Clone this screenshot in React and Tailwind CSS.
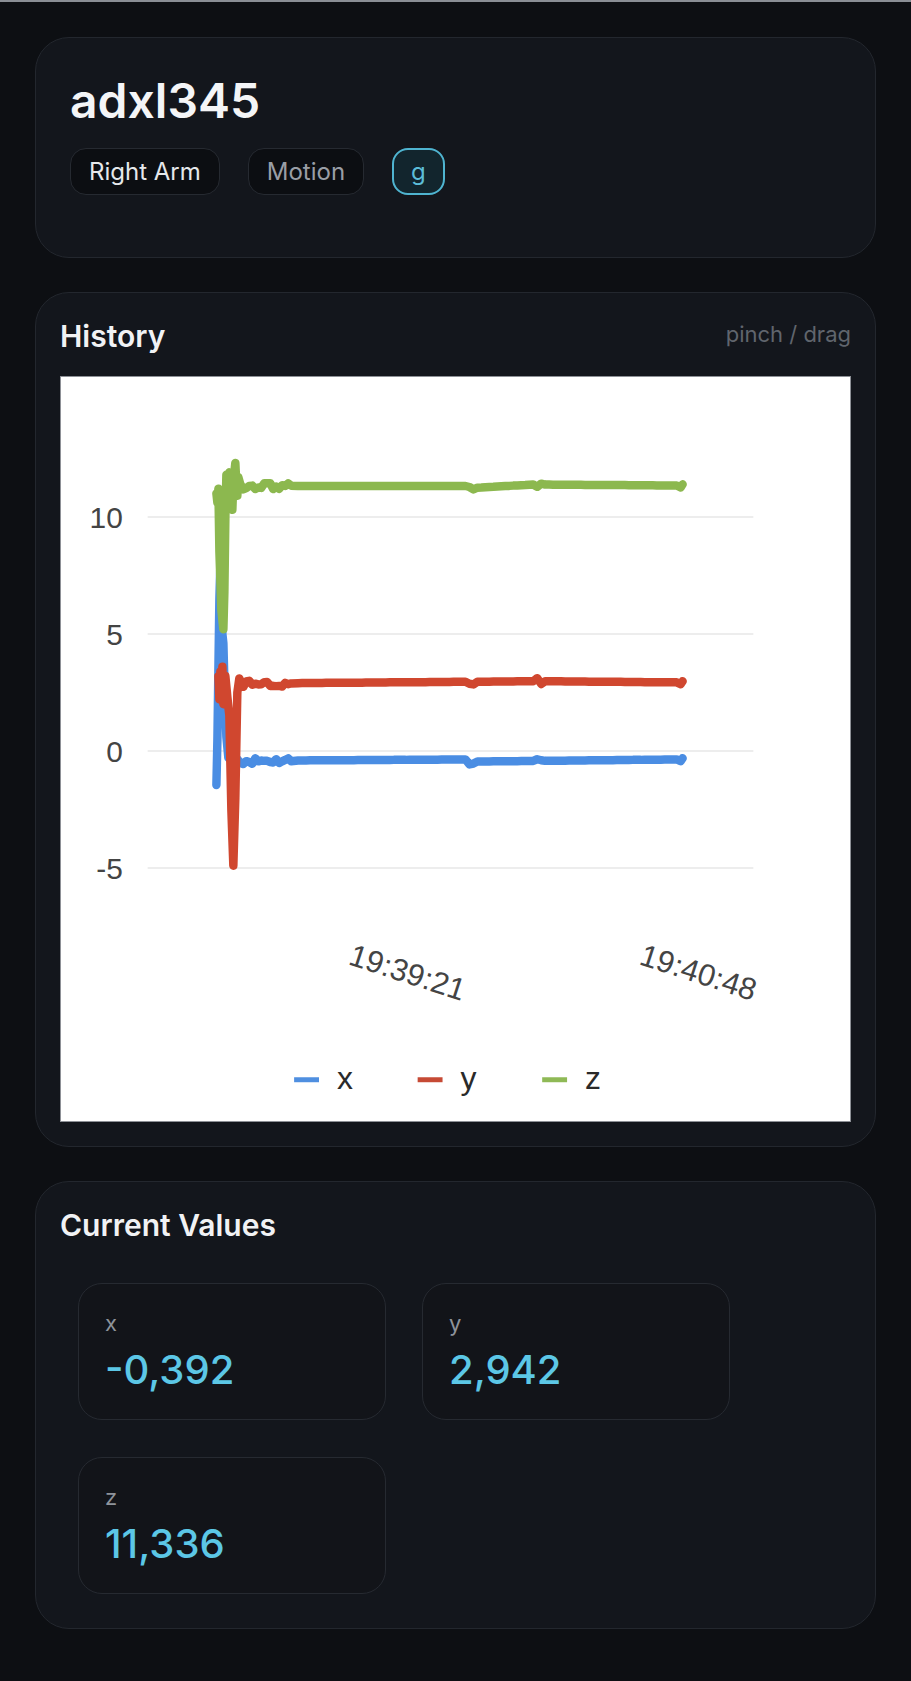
import React from "react";

// accelerometer history chart, drawn in page pixel space
const ZERO_Y = 751;
const UNIT = 23.5;
const toY = (v) => ZERO_Y - v * UNIT;

function makeRandom(seed) {
  let s = seed;
  return () => {
    s = (s * 16807) % 2147483647;
    return s / 2147483647;
  };
}

function buildSeries(head, level, seed) {
  const rand = makeRandom(seed);
  const pts = head.map(([x, v]) => [x, v]);
  // settling wobble right after the spike
  for (let x = 243; x <= 292; x += 3) {
    pts.push([x, level(x) + (rand() - 0.5) * 0.28]);
  }
  for (let x = 298; x <= 680; x += 4) {
    let v = level(x);
    if (Math.abs(x - 472) < 5 || Math.abs(x - 541) < 5) {
      v += (rand() - 0.5) * 0.3;
    }
    pts.push([x, v]);
  }
  pts.push([682, level(682) - 0.08]);
  pts.push([684, level(684) + 0.05]);
  return pts.map(([x, v]) => `${x},${toY(v).toFixed(1)}`).join(" ");
}

const lerp = (a, b, t) => a + (b - a) * Math.min(1, Math.max(0, t));

const seriesX = buildSeries(
  [
    [216, -1.45], [217, 0.5], [218, 3.5], [219, 6.5], [220, 8], [221, 7.2],
    [222, 5], [223, 4.6], [224, 3], [226, 0.6], [228, -0.3], [232, -0.4],
    [236, -0.3], [240, -0.5],
  ],
  (x) => (x < 470 ? lerp(-0.42, -0.36, (x - 240) / 230) : lerp(-0.45, -0.36, (x - 480) / 200)),
  11
);

const seriesY = buildSeries(
  [
    [218, 3.2], [219, 2.2], [220, 3.4], [221, 2.5], [222, 3.6], [223, 2.0],
    [225, 3.2], [227, 2.3], [229, 1.5], [231, -2.5], [233, -4.9], [235, -2],
    [237, 2.5], [239, 3.1], [241, 2.9],
  ],
  (x) => (x < 541 ? lerp(2.88, 2.98, (x - 240) / 300) : lerp(2.98, 2.93, (x - 541) / 140)),
  29
);

const seriesZ = buildSeries(
  [
    [216, 11.0], [217, 10.6], [218, 11.2], [219, 8.5], [221, 6], [223, 5.2],
    [224, 6.8], [225, 10], [226, 11.8], [228, 11.5], [229, 11.9], [231, 10.6],
    [232, 10.3], [233, 11.5], [235, 12.3], [236, 11.4], [237, 10.9], [238, 11.7],
    [240, 11.4],
  ],
  (x) =>
    x < 475 ? 11.32 : x < 541 ? lerp(11.24, 11.4, (x - 475) / 66) : lerp(11.38, 11.34, (x - 541) / 140),
  47
);

const gridValues = [10, 5, 0, -5];

const legend = [
  { label: "x", color: "#4f8fe0", x: 294 },
  { label: "y", color: "#c64a35", x: 418 },
  { label: "z", color: "#8fb956", x: 543 },
];

function HistoryChart() {
  return (
    <div className="h-[746px] w-full border border-[#8d9096] bg-white">
      <svg
        viewBox="60 376 792 746"
        className="block h-full w-full"
        fontFamily="Liberation Sans, Arial, sans-serif"
      >
        {gridValues.map((v) => (
          <g key={v}>
            <line x1="147" x2="755" y1={toY(v)} y2={toY(v)} stroke="#e7e7e7" strokeWidth="1.5" />
            <text x="122" y={toY(v) + 11} textAnchor="end" fontSize="30" fill="#444">
              {v}
            </text>
          </g>
        ))}

        <polyline points={seriesX} fill="none" stroke="#4a8de3" strokeWidth="8.5" strokeLinejoin="round" strokeLinecap="round" />
        <polyline points={seriesY} fill="none" stroke="#d0472f" strokeWidth="8.5" strokeLinejoin="round" strokeLinecap="round" />
        <polyline points={seriesZ} fill="none" stroke="#8cb84f" strokeWidth="8.5" strokeLinejoin="round" strokeLinecap="round" />

        <text x="408" y="984" textAnchor="middle" fontSize="31" fill="#444" transform="rotate(18 408 973)">
          19:39:21
        </text>
        <text x="700" y="984" textAnchor="middle" fontSize="31" fill="#444" transform="rotate(18 700 973)">
          19:40:48
        </text>

        {legend.map((item) => (
          <g key={item.label}>
            <line x1={item.x} x2={item.x + 25} y1="1081" y2="1081" stroke={item.color} strokeWidth="5" />
            <text x={item.x + 43} y="1090" fontSize="32" fill="#2a2a2a">
              {item.label}
            </text>
          </g>
        ))}
      </svg>
    </div>
  );
}

function Badge({ children, tone = "plain" }) {
  const tones = {
    plain: "border border-[#262a31] bg-[#0c0e12] text-[#e6e8eb] px-[18px]",
    muted: "border border-[#262a31] bg-[#0c0e12] text-[#9a9ea6] px-[18px]",
    accent: "border-2 border-[#4fb4d0] bg-[#12252d] text-[#5cbdd8] px-[17px]",
  };
  return (
    <span
      className={`flex h-[47px] items-center rounded-2xl text-[24px] leading-none ${tones[tone]}`}
    >
      {children}
    </span>
  );
}

function ValueTile({ label, value }) {
  return (
    <div className="rounded-[24px] border border-[#262a31] bg-[#121419] px-[26px] pt-[26px] pb-[27px]">
      <div className="text-[22px] leading-[26px] text-[#8e939a]">{label}</div>
      <div className="mt-[12px] text-[40px] font-medium leading-[44px] text-[#5cc7e6]">{value}</div>
    </div>
  );
}

export default function App() {
  return (
    <div className="min-h-screen bg-[#0d0f13] font-['Inter',sans-serif] text-white">
      <div className="h-[2px] bg-[#8a8e95]" />
      <div className="flex flex-col gap-[34px] px-[35px] pt-[35px] pb-[50px]">
        <section className="rounded-[34px] border border-[#23272e] bg-[#13161c] pl-[34px] pr-8 pt-[39px] pb-[62px]">
          <h1 className="text-[48px] font-semibold leading-[48px] text-[#f4f5f7]">adxl345</h1>
          <div className="mt-[23px] flex gap-7">
            <Badge>Right Arm</Badge>
            <Badge tone="muted">Motion</Badge>
            <Badge tone="accent">g</Badge>
          </div>
        </section>

        <section className="rounded-[34px] border border-[#23272e] bg-[#13161c] px-6 pt-[25px] pb-6">
          <div className="flex items-start justify-between">
            <h2 className="text-[30px] font-semibold leading-[36px] text-[#f1f2f4]">History</h2>
            <span className="mt-[3px] text-[22px] leading-[26px] text-[#60656d]">pinch / drag</span>
          </div>
          <div className="mt-[22px]">
            <HistoryChart />
          </div>
        </section>

        <section className="rounded-[34px] border border-[#23272e] bg-[#13161c] px-6 pt-[25px] pb-[34px]">
          <h2 className="text-[30px] font-semibold leading-[36px] text-[#f1f2f4]">Current Values</h2>
          <div className="mt-[40px] grid grid-cols-[308px_308px] gap-x-[36px] gap-y-[37px] pl-[18px]">
            <ValueTile label="x" value="-0,392" />
            <ValueTile label="y" value="2,942" />
            <ValueTile label="z" value="11,336" />
          </div>
        </section>
      </div>
    </div>
  );
}
